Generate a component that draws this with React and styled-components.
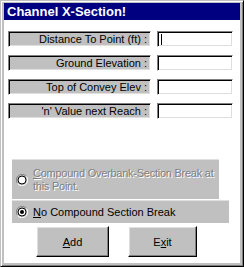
import styled, { createGlobalStyle } from "styled-components";

const Global = createGlobalStyle`
  html, body {
    margin: 0;
    padding: 0;
    background: #c0c0c0;
  }
  body {
    font-family: "Liberation Sans", Arial, sans-serif;
    font-size: 11px;
  }
`;

const Window = styled.div`
  box-sizing: border-box;
  width: 244px;
  height: 267px;
  display: flex;
  flex-direction: column;
  background: #c0c0c0;
  border-top: 1px solid #c0c0c0;
  border-left: 1px solid #c0c0c0;
  border-right: 1px solid #000;
  border-bottom: 1px solid #000;
  box-shadow: inset 1px 1px 0 #fff, inset -1px -1px 0 #808080;
  padding: 2px;
`;

const TitleBar = styled.div`
  flex: none;
  height: 17px;
  margin: 0 1px;
  background: #000080;
  color: #fff;
  font-weight: bold;
  font-size: 13px;
  line-height: 17px;
  padding-left: 3px;
  white-space: nowrap;
`;

const Client = styled.div`
  flex: 1;
  margin: 0 1px 1px 1px;
  background: #fff;
  display: flex;
  flex-direction: column;
  padding: 11px 0 0 4px;
`;

const Fields = styled.div`
  display: flex;
  flex-direction: column;
  gap: 8px;
`;

const Row = styled.div`
  display: flex;
  gap: 6px;
`;

const sunken = `
  box-sizing: border-box;
  border-top: 1px solid #808080;
  border-left: 1px solid #808080;
  border-right: 1px solid #fff;
  border-bottom: 1px solid #fff;
  box-shadow: inset 1px 1px 0 #000, inset -1px -1px 0 #dfdfdf;
`;

const Label = styled.div`
  ${sunken}
  width: 143px;
  height: 16px;
  background: #c0c0c0;
  color: #000;
  text-align: right;
  line-height: 14px;
  padding-right: 3px;
  white-space: nowrap;
`;

const Field = styled.div`
  ${sunken}
  position: relative;
  width: 76px;
  height: 16px;
  background: #fff;
`;

const Caret = styled.span`
  position: absolute;
  left: 3px;
  top: 2px;
  width: 1px;
  height: 11px;
  background: #000;
`;

const Options = styled.div`
  display: flex;
  flex-direction: column;
  margin: 40px 0 0 4px;
  gap: 1px;
`;

const Option = styled.div`
  flex: none;
  box-sizing: border-box;
  width: ${(p) => p.$w}px;
  height: ${(p) => p.$h}px;
  background: #c0c0c0;
  display: flex;
  align-items: center;
  gap: 5px;
  padding-left: 4px;
  border-top: 1px solid #dfdfdf;
  overflow: hidden;
`;

const OptionText = styled.span`
  line-height: 13px;
  white-space: nowrap;
  letter-spacing: ${(p) => (p.$disabled ? "-0.25px" : "0")};
  color: ${(p) => (p.$disabled ? "#808080" : "#000")};
  text-shadow: ${(p) => (p.$disabled ? "1px 1px 0 #fff" : "none")};
`;

const Buttons = styled.div`
  display: flex;
  gap: 19px;
  margin: 3px 0 0 28px;
`;

const Button = styled.button`
  flex: none;
  box-sizing: border-box;
  width: ${(p) => p.$w}px;
  height: 31px;
  background: #c0c0c0;
  font-family: "Liberation Sans", Arial, sans-serif;
  font-size: 11px;
  color: #000;
  padding: 0;
  border-top: 1px solid #fff;
  border-left: 1px solid #fff;
  border-right: 1px solid #000;
  border-bottom: 1px solid #000;
  box-shadow: inset -1px -1px 0 #808080, inset 1px 1px 0 #dfdfdf;
`;

function Radio({ checked }) {
  return (
    <svg width="12" height="12" viewBox="0 0 12 12" style={{ flex: "none" }}>
      <path d="M10.5 2.5 A5 5 0 0 0 1.5 9.5" stroke="#808080" fill="none" />
      <path d="M1.5 9.5 A5 5 0 0 0 10.5 2.5" stroke="#fff" fill="none" />
      <circle cx="6" cy="6" r="4" fill="#fff" stroke="#000" strokeWidth="1" />
      {checked && <circle cx="6" cy="6" r="2" fill="#000" />}
    </svg>
  );
}

const fields = [
  "Distance To Point (ft) :",
  "Ground Elevation :",
  "Top of Convey Elev :",
  "'n' Value next Reach :",
];

export default function App() {
  return (
    <>
      <Global />
      <Window>
        <TitleBar>Channel X-Section!</TitleBar>
        <Client>
          <Fields>
            {fields.map((f, i) => (
              <Row key={f}>
                <Label>{f}</Label>
                <Field>{i === 0 && <Caret />}</Field>
              </Row>
            ))}
          </Fields>
          <Options>
            <Option $w={207} $h={40}>
              <Radio />
              <OptionText $disabled>
                <u>C</u>ompound Overbank-Section Break at
                <br />
                this Point.
              </OptionText>
            </Option>
            <Option $w={217} $h={23}>
              <Radio checked />
              <OptionText>
                <u>N</u>o Compound Section Break
              </OptionText>
            </Option>
          </Options>
          <Buttons>
            <Button $w={73}>
              <u>A</u>dd
            </Button>
            <Button $w={69}>
              E<u>x</u>it
            </Button>
          </Buttons>
        </Client>
      </Window>
    </>
  );
}
